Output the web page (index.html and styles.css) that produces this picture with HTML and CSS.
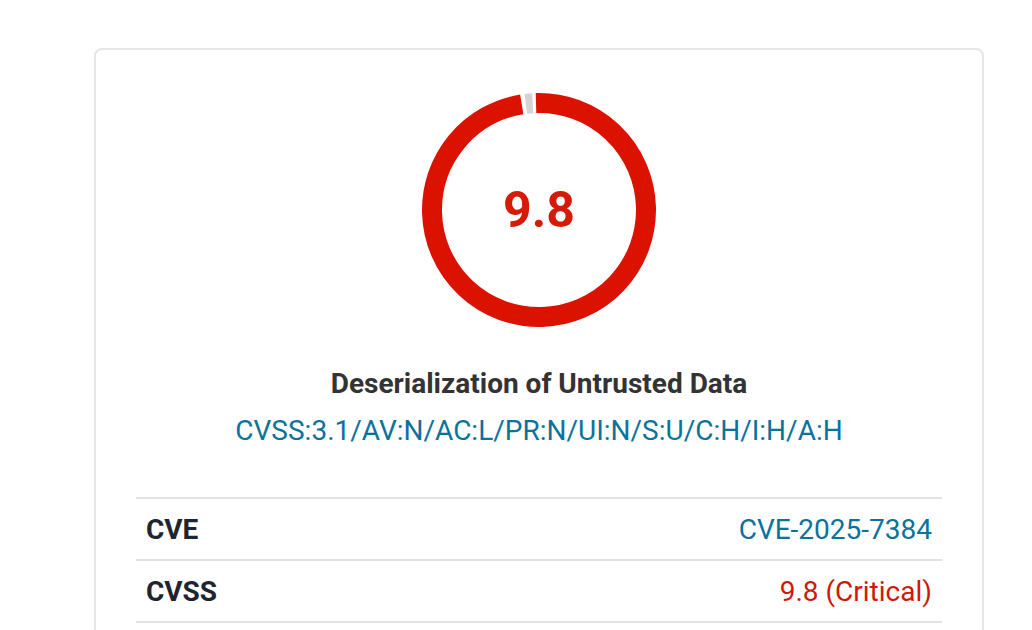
FILE: index.html
```html
<!DOCTYPE html>
<html>
<head>
<meta charset="utf-8">
<link rel="stylesheet" href="styles.css">
</head>
<body>
<div class="card">
  <div class="gauge">
    <svg width="240" height="240" viewBox="-120 -120 240 240">
      <circle class="arc red" r="107" transform="rotate(-91.6)" stroke-dasharray="657.2 1000"></circle>
      <circle class="arc gray" r="107" transform="rotate(-97.1)" stroke-dasharray="7.1 1000"></circle>
    </svg>
    <div class="score">9.8</div>
  </div>
  <div class="title">Deserialization of Untrusted Data</div>
  <div class="vector">CVSS:3.1/AV:N/AC:L/PR:N/UI:N/S:U/C:H/I:H/A:H</div>
  <div class="table">
    <div class="row"><span class="label">CVE</span><span class="value link">CVE-2025-7384</span></div>
    <div class="row"><span class="label">CVSS</span><span class="value crit">9.8 (Critical)</span></div>
  </div>
</div>
</body>
</html>
```
FILE: styles.css
```css
html, body {
  margin: 0;
  padding: 0;
  background: #ffffff;
  font-family: Roboto, "Liberation Sans", Arial, sans-serif;
}
body {
  padding: 48px 48px 0 94px;
}
.card {
  border: 2px solid #e6e6e6;
  border-radius: 8px;
  padding: 40px;
  box-sizing: content-box;
  width: 806px;
  min-height: 700px;
}
.gauge {
  position: relative;
  width: 240px;
  height: 240px;
  margin: 0 auto;
}
.gauge svg {
  display: block;
}
.arc {
  fill: none;
  stroke-width: 20;
}
.arc.red { stroke: #db1200; }
.arc.gray { stroke: #d4d4d4; }
.score {
  position: absolute;
  inset: 0;
  display: flex;
  align-items: center;
  justify-content: center;
  font-size: 50px;
  font-weight: 700;
  color: #d51a08;
}
.title {
  margin-top: 37px;
  text-align: center;
  font-size: 28px;
  font-weight: 700;
  color: #333333;
  line-height: 34px;
}
.vector {
  margin-top: 13px;
  text-align: center;
  font-size: 28px;
  color: #0b729c;
  line-height: 34px;
}
.table {
  margin-top: 49px;
  border-top: 2px solid #e2e2e2;
}
.row {
  display: flex;
  justify-content: space-between;
  align-items: center;
  height: 60px;
  padding: 0 10px;
  border-bottom: 2px solid #e2e2e2;
  font-size: 28px;
}
.label {
  font-weight: 700;
  color: #1e2530;
}
.link { color: #0b729c; }
.crit { color: #cc1a0a; }
```
